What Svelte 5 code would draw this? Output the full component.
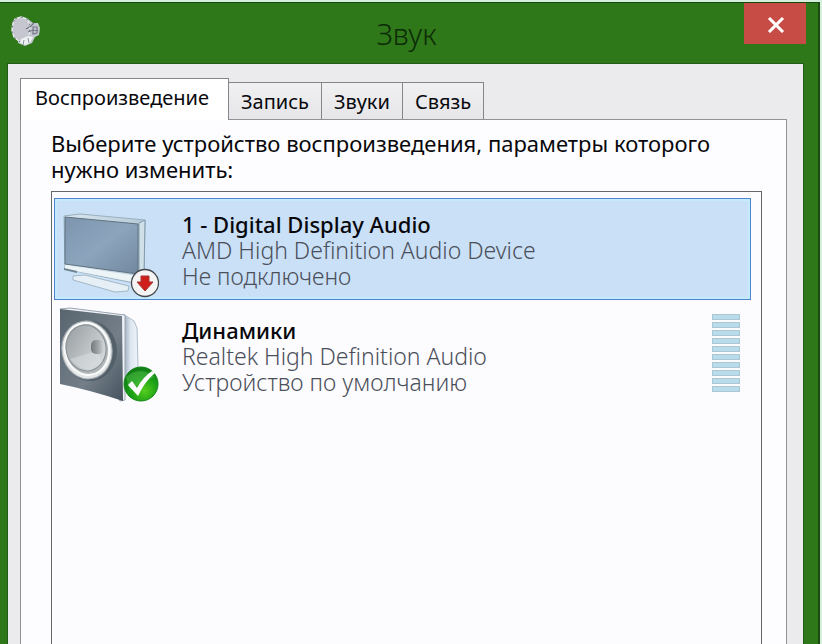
<script lang="ts">
  type Device = {
    id: string;
    name: string;
    driver: string;
    status: string;
    meter: boolean;
  };

  const tabs = ["Воспроизведение", "Запись", "Звуки", "Связь"];

  const devices: Device[] = [
    { id: "display", name: "1 - Digital Display Audio", driver: "AMD High Definition Audio Device", status: "Не подключено", meter: false },
    { id: "speakers", name: "Динамики", driver: "Realtek High Definition Audio", status: "Устройство по умолчанию", meter: true },
  ];

  let activeTab = $state(0);
  let selected = $state("display");
</script>

<div class="desktop">
  <section class="window" aria-labelledby="window-title">
    <header class="titlebar">
      <svg class="app-icon" viewBox="0 0 30 32" aria-hidden="true">
        <path d="M8 4 L17 4 L22 8 L27 8 L29 13 L28 20 L24 22 L21 28 L14 31 L7 28 Z" fill="#c3c7ce" />
        <path d="M4 4 L10 2 L16 4 L19 10 L18 20 L14 27 L9 27 L3 22 L1 15 L2 8 Z" fill="#c6c6d0" stroke="#e6e8ec" stroke-width="1.5" stroke-linejoin="round" />
        <path d="M4 4 L10 2 L16 4 L19 10 L18 20 L14 27 L9 27 L3 22 L1 15 L2 8 Z" fill="none" stroke="#6d7377" stroke-dasharray="2 4" />
        <path d="M15 14 L20 11 L23 8 M17 17 L22 15 L27 16 M22 12 L26 12 L26 18 L22 19 Z" fill="none" stroke="#75768a" stroke-width="1.2" />
        <path d="M10 24 L17 21 L22 22 L19 28 L14 30 L9 28 Z" fill="#edf1f2" />
        <path d="M13 25 L12 30 M17 23 L18 28" stroke="#8b929a" />
      </svg>
      <h1 id="window-title">Звук</h1>
      <button class="close" aria-label="Закрыть">
        <svg viewBox="0 0 18 16" aria-hidden="true">
          <path d="M2 1 L16 15 M16 1 L2 15" />
        </svg>
      </button>
    </header>

    <div class="client">
      <div class="tabs" role="tablist">
        {#each tabs as tab, i}
          <button
            class="tab"
            class:active={activeTab === i}
            role="tab"
            aria-selected={activeTab === i}
            onclick={() => (activeTab = i)}
          >{tab}</button>
        {/each}
      </div>

      <div class="pane" role="tabpanel">
        <p class="hint">Выберите устройство воспроизведения, параметры которого нужно изменить:</p>

        <div class="devices">
          {#each devices as device}
            <button
              class="device"
              class:selected={selected === device.id}
              aria-pressed={selected === device.id}
              onclick={() => (selected = device.id)}
            >
              {#if device.id === "display"}
                <svg class="device-icon" viewBox="0 0 104 100" aria-hidden="true">
                  <defs>
                    <linearGradient id="screen" x1="0" y1="0" x2="1" y2="1">
                      <stop offset="0" stop-color="#7d94ad" />
                      <stop offset="0.5" stop-color="#8ca5bd" />
                      <stop offset="1" stop-color="#71879f" />
                    </linearGradient>
                    <linearGradient id="frame" x1="0" y1="0" x2="1" y2="0">
                      <stop offset="0" stop-color="#dbe7ef" />
                      <stop offset="1" stop-color="#b5cad8" />
                    </linearGradient>
                  </defs>
                  <path d="M18 77 L30 76 L74 87 L73 92 L60 93 L18 81 Z" fill="#e6eff5" stroke="#a3b8c6" />
                  <path d="M9 17 L25 15 L90 21 L89 76 L84 85 L10 70 Z" fill="url(#frame)" stroke="#9ab0be" />
                  <path d="M84 24 L90 21 L89 76 L84 85 Z" fill="#d0e0e9" stroke="#829baa" />
                  <path d="M10 18 L83 25 L83 75 L10 65 Z" fill="url(#screen)" stroke="#5e7281" />
                  <path d="M10 66 L83 77 L83 84 L10 70 Z" fill="#edf4f7" />
                  <path d="M9 69 L22 72 L22 74 L9 71 Z" fill="#6e8492" />
                  <circle cx="90" cy="84" r="13.5" fill="#f4f4f4" stroke="#44484d" stroke-width="1.3" />
                  <path d="M86 77 H94 V83 H98 L90 92 L82 83 H86 Z" fill="#cf1f1c" stroke="#a8332f" />
                </svg>
              {:else}
                <svg class="device-icon" viewBox="0 0 104 100" aria-hidden="true">
                  <defs>
                    <linearGradient id="panel" x1="0" y1="0" x2="1" y2="1">
                      <stop offset="0" stop-color="#58656f" />
                      <stop offset="0.6" stop-color="#737e88" />
                      <stop offset="1" stop-color="#46535e" />
                    </linearGradient>
                    <linearGradient id="cone" x1="0" y1="0" x2="1" y2="1">
                      <stop offset="0" stop-color="#949b9e" />
                      <stop offset="0.5" stop-color="#bbc0c2" />
                      <stop offset="1" stop-color="#dfe2e3" />
                    </linearGradient>
                    <linearGradient id="cap" x1="0" y1="0" x2="1" y2="0">
                      <stop offset="0" stop-color="#73797c" />
                      <stop offset="0.6" stop-color="#a4a9ab" />
                      <stop offset="1" stop-color="#d3d6d8" />
                    </linearGradient>
                    <linearGradient id="cabinet" x1="0" y1="0" x2="1" y2="0">
                      <stop offset="0" stop-color="#91a1b4" />
                      <stop offset="0.5" stop-color="#dce5ef" />
                      <stop offset="1" stop-color="#eff4fa" />
                    </linearGradient>
                    <radialGradient id="ok" cx="0.6" cy="0.7" r="0.7">
                      <stop offset="0" stop-color="#54cd1d" />
                      <stop offset="0.6" stop-color="#179d15" />
                      <stop offset="1" stop-color="#117b15" />
                    </radialGradient>
                  </defs>
                  <path d="M68 9 L79 16 L82 23 L83 62 L77 78 L68 86 Z" fill="url(#cabinet)" stroke="#aebdcd" />
                  <path d="M5 4 L15 3 L70 10 L70 95 L65 96 Z" fill="#eef1f5" stroke="#9ba5b2" />
                  <path d="M5 4 L67 11 L68 96 Q35 85 5 79 Z" fill="url(#panel)" />
                  <ellipse cx="35" cy="46" rx="27" ry="30" fill="#536069" />
                  <ellipse cx="32" cy="45" rx="25" ry="29" transform="rotate(-10 32 45)" fill="#e4e7e8" stroke="#a8afb3" />
                  <ellipse cx="32" cy="44" rx="22" ry="26" transform="rotate(-10 32 44)" fill="#b2b7b9" stroke="#fafbfb" stroke-width="2" />
                  <ellipse cx="31" cy="43" rx="20" ry="23" transform="rotate(-10 31 43)" fill="url(#cone)" stroke="#858e92" />
                  <path d="M42 46 L47 57 L36 65 Q22 64 15 54 Z" fill="#dce0e1" opacity="0.5" />
                  <rect x="36" y="35" width="13" height="14" rx="5" fill="url(#cap)" />
                  <circle cx="86" cy="79" r="17" fill="url(#ok)" stroke="#16851b" />
                  <path d="M71 72 Q85 60 100 72 Q87 75 75 86 Z" fill="#5abf54" opacity="0.45" />
                  <path d="M73 80 L77 76 L82 83 Q88 72 97 66 L100 68 Q90 76 83 91 Z" fill="#fff" />
                </svg>
              {/if}

              <span class="info">
                <span class="name">{device.name}</span>
                <span class="detail">{device.driver}</span>
                <span class="detail">{device.status}</span>
              </span>

              {#if device.meter}
                <span class="meter" aria-hidden="true">
                  {#each Array(10) as _}
                    <span class="level"></span>
                  {/each}
                </span>
              {/if}
            </button>
          {/each}
        </div>
      </div>
    </div>
  </section>
</div>

<style>
  :global(body) {
    margin: 0;
  }

  .desktop {
    box-sizing: border-box;
    display: flex;
    min-height: 100vh;
    padding: 2px 2px 0 0;
    background: #d5efdc;
    font-family: "Noto Sans", "Open Sans", sans-serif;
    color: #08080c;
  }

  .window {
    box-sizing: border-box;
    display: flex;
    flex: 1;
    flex-direction: column;
    padding: 0 14px 0 7px;
    background: #2e7819;
    border-top: 1px solid #12480b;
    border-right: 2px solid #1c4a12;
  }

  .titlebar {
    display: grid;
    grid-template-columns: 62px 1fr 62px;
    align-items: start;
    height: 60px;
    margin-right: -2px;
  }

  .app-icon {
    width: 30px;
    height: 32px;
    margin: 12px 0 0 4px;
  }

  h1 {
    margin: 12px 0 0;
    font-size: 29px;
    font-weight: 300;
    line-height: 38px;
    text-align: center;
    color: #0d2b08;
  }

  .close {
    display: flex;
    align-items: center;
    justify-content: center;
    width: 62px;
    height: 41px;
    padding: 2px 0 0 2px;
    background: #c84c46;
    border: none;
  }

  .close svg {
    width: 18px;
    height: 16px;
    fill: none;
    stroke: #fff;
    stroke-width: 3;
  }

  .client {
    display: flex;
    flex: 1;
    flex-direction: column;
    padding: 14px 16px 0 12px;
    background: #ebebee;
    border: 1px solid #245b18;
    border-bottom: none;
  }

  .tabs {
    display: flex;
    align-items: flex-end;
  }

  .tab {
    height: 37px;
    margin: 0 0 0 -1px;
    padding: 2px 12px 0;
    background: linear-gradient(#f0f0f1, #e6e6e9);
    border: 1px solid #85868a;
    border-bottom: none;
    font-family: inherit;
    font-size: 20px;
    line-height: 34px;
    color: inherit;
    white-space: nowrap;
  }

  .tab.active {
    z-index: 1;
    height: 42px;
    margin: 0 0 -1px;
    padding: 0 19px 4px 14px;
    background: #fff;
  }

  .pane {
    flex: 1;
    display: flex;
    flex-direction: column;
    padding: 10px 24px 0 30px;
    background: #fdfdff;
    border: 1px solid #929296;
    border-bottom: none;
  }

  .hint {
    margin: 0 0 9px;
    font-size: 22px;
    line-height: 26px;
  }

  .devices {
    display: flex;
    flex: 1;
    flex-direction: column;
    gap: 4px;
    padding: 6px 10px 0 2px;
    background: #fcfcfe;
    border: 1px solid #66666b;
    border-bottom: none;
  }

  .device {
    display: flex;
    align-items: flex-start;
    width: 100%;
    height: 102px;
    padding: 0 10px 0 0;
    background: none;
    border: 1px solid transparent;
    font-family: inherit;
    color: inherit;
    text-align: left;
  }

  .device.selected {
    background: #c9e0f6;
    border-color: #5084cc;
    box-shadow: inset 0 0 0 2px #c4ebfd;
  }

  .device-icon {
    flex-shrink: 0;
    width: 104px;
    height: 100px;
  }

  .info {
    display: flex;
    flex: 1;
    flex-direction: column;
    padding: 12px 0 0 23px;
    line-height: 26px;
  }

  .name {
    font-size: 22px;
    font-weight: 500;
  }

  .detail {
    font-size: 23px;
    font-weight: 300;
    color: #4b4f5a;
  }

  .meter {
    display: flex;
    flex-direction: column;
    gap: 2px;
    padding-top: 9px;
  }

  .level {
    box-sizing: border-box;
    width: 28px;
    height: 6px;
    background: #b9dcec;
    border: 1px solid #abc7d2;
  }
</style>
